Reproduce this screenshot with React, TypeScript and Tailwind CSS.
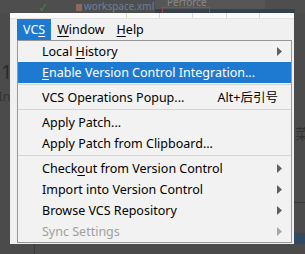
import React from "react";

type Item =
  | { type: "sep" }
  | {
      type: "item";
      label: React.ReactNode;
      shortcut?: string;
      arrow?: boolean;
      active?: boolean;
      disabled?: boolean;
    };

const U = ({ children }: { children: React.ReactNode }) => (
  <span className="underline underline-offset-[2px] decoration-[1px]">{children}</span>
);

const items: Item[] = [
  { type: "item", label: <>Local <U>H</U>istory</>, arrow: true },
  { type: "item", label: <><U>E</U>nable Version Control Integration...</>, active: true },
  { type: "sep" },
  { type: "item", label: "VCS Operations Popup...", shortcut: "Alt+后引号" },
  { type: "sep" },
  { type: "item", label: "Apply Patch..." },
  { type: "item", label: "Apply Patch from Clipboard..." },
  { type: "sep" },
  { type: "item", label: <>Check<U>o</U>ut from Version Control</>, arrow: true },
  { type: "item", label: "Import into Version Control", arrow: true },
  { type: "item", label: "Browse VCS Repository", arrow: true },
  { type: "item", label: "Sync Settings", arrow: true, disabled: true },
];

function Arrow({ color }: { color: string }) {
  return (
    <svg width="5" height="9" viewBox="0 0 5 9" className="shrink-0">
      <path d="M0 0 L5 4.5 L0 9 Z" fill={color} />
    </svg>
  );
}

export default function App() {
  return (
    <div
      className="relative w-[305px] h-[254px] overflow-hidden bg-[#4b4b4b] pt-[13px] pl-[10px]"
      style={{ fontFamily: "'Noto Sans', 'Noto Sans CJK SC', sans-serif" }}
    >
      {/* blurred background fragments */}
      <div className="absolute left-[0px] top-[0px] w-[305px] h-[13px] bg-[#4e4e4e]" />
      <div className="absolute left-[40px] top-[3px] text-[9px] leading-[9px] text-[#4f8f4f]">✓</div>
      <div className="absolute left-[76px] top-[4px] w-[6px] h-[7px] bg-[#8a6a5a]" />
      <div className="absolute left-[84px] top-[1px] text-[10px] leading-[11px] text-[#6c7f9a]">workspace.xml D</div>
      <div className="absolute left-[155px] top-[0px] w-[110px] h-[13px] bg-[#565656]" />
      <div className="absolute left-[167px] top-[-3px] text-[10px] leading-[11px] text-[#888]">Perforce</div>
      <div className="absolute left-[155px] top-[9px] w-[140px] h-[4px] bg-[#34404c]" />
      <div className="absolute left-[162px] top-[7px] w-[48px] h-[6px] border border-[#9a4a40] border-b-0" />
      <div className="absolute left-[1px] top-[62px] text-[20px] leading-[20px] text-[#2a2a2a]">1</div>
      <div className="absolute left-[-2px] top-[90px] text-[13px] leading-[13px] text-[#333]">In</div>
      <div className="absolute left-[295px] top-[126px] text-[14px] leading-[16px] text-[#333]">菜</div>
      <div className="absolute left-[294px] top-[202px] w-[11px] h-[1px] bg-[#3a3a3a]" />
      <div className="absolute left-[294px] top-[233px] w-[11px] h-[11px] bg-[#324a60]" />
      <div className="absolute left-[34px] top-[244px] w-[1px] h-[10px] bg-[#3a3a3a]" />

      {/* window panel */}
      <div className="relative w-[284px] h-[231px] bg-[#f0f0f0] flex flex-col">
        {/* top strip of table behind */}
        <div className="h-[6px] bg-[#fafafa] border-b border-[#e2e2e2] flex">
          <div className="w-[117px] border-r border-[#d8d8d8]" />
          <div className="w-[33px] border-r border-[#d8d8d8]" />
          <div className="w-[33px] border-r border-[#d8d8d8]" />
          <div className="w-[34px] border-r border-[#d8d8d8]" />
          <div className="w-[33px] border-r border-[#d8d8d8]" />
        </div>
        {/* menu bar */}
        <div className="h-[21px] flex pl-[7px] text-[12.5px] leading-[21px] text-black">
          <div className="px-[6px] bg-[#1e7ad0] text-white">
            VC<U>S</U>
          </div>
          <div className="px-[6px]">
            <U>W</U>indow
          </div>
          <div className="px-[6px]">
            <U>H</U>elp
          </div>
        </div>
        {/* dropdown */}
        <div className="ml-[7px] w-[275px] border border-[#979797] bg-[#f2f2f2] flex flex-col text-[12.5px]">
          {items.map((it, i) =>
            it.type === "sep" ? (
              <div key={i} className="h-[4px] pt-[1px]">
                <div className="h-[1px] bg-[#d5d5d5]" />
              </div>
            ) : (
              <div
                key={i}
                className={
                  "h-[21px] flex items-center justify-between pl-[24px] pr-[9px] leading-[21px] " +
                  (it.active ? "bg-[#1e7ad0] text-white" : it.disabled ? "text-[#a0a0a0]" : "text-black")
                }
              >
                <span className="whitespace-nowrap">{it.label}</span>
                {it.shortcut ? (
                  <span className="mr-[4px] whitespace-nowrap">{it.shortcut}</span>
                ) : it.arrow ? (
                  <Arrow color={it.disabled ? "#a8a8a8" : "#606060"} />
                ) : null}
              </div>
            )
          )}
        </div>
      </div>
    </div>
  );
}
